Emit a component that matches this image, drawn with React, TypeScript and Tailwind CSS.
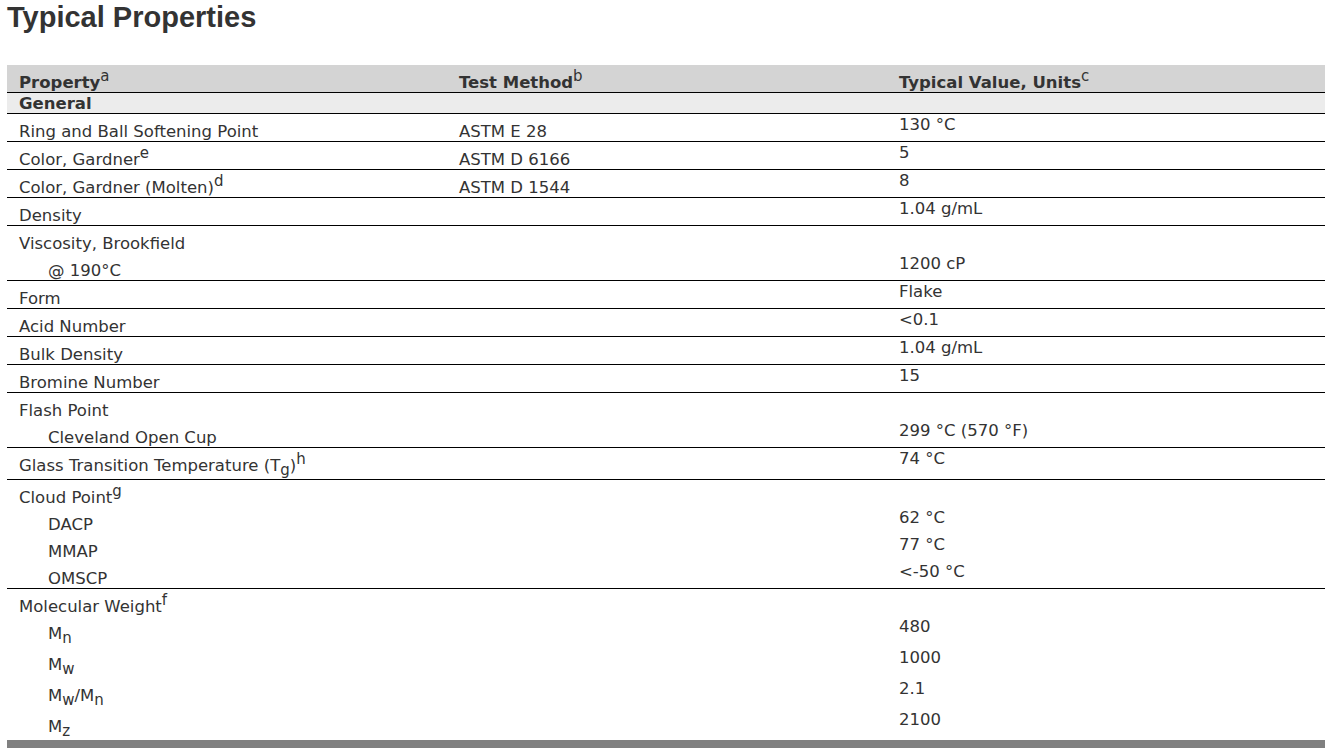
import type { ReactNode } from 'react'

type Line = { p: ReactNode; m?: string; v?: string; indent?: boolean; tall?: boolean }

const Sup = ({ children }: { children: ReactNode }) => (
  <sup className="text-[15px] font-normal">{children}</sup>
)
const Sub = ({ children }: { children: ReactNode }) => (
  <sub className="text-[15px]">{children}</sub>
)

const ROWS: Line[][] = [
  [{ p: 'Ring and Ball Softening Point', m: 'ASTM E 28', v: '130 °C' }],
  [{ p: <>Color, Gardner<Sup>e</Sup></>, m: 'ASTM D 6166', v: '5' }],
  [{ p: <>Color, Gardner (Molten)<Sup>d</Sup></>, m: 'ASTM D 1544', v: '8' }],
  [{ p: 'Density', v: '1.04 g/mL' }],
  [{ p: 'Viscosity, Brookfield' }, { p: '@ 190°C', v: '1200 cP', indent: true }],
  [{ p: 'Form', v: 'Flake' }],
  [{ p: 'Acid Number', v: '<0.1' }],
  [{ p: 'Bulk Density', v: '1.04 g/mL' }],
  [{ p: 'Bromine Number', v: '15' }],
  [{ p: 'Flash Point' }, { p: 'Cleveland Open Cup', v: '299 °C (570 °F)', indent: true }],
  [{ p: <>Glass Transition Temperature (T<Sub>g</Sub>)<Sup>h</Sup></>, v: '74 °C', tall: true }],
  [
    { p: <>Cloud Point<Sup>g</Sup></> },
    { p: 'DACP', v: '62 °C', indent: true },
    { p: 'MMAP', v: '77 °C', indent: true },
    { p: 'OMSCP', v: '<-50 °C', indent: true },
  ],
  [
    { p: <>Molecular Weight<Sup>f</Sup></> },
    { p: <>M<Sub>n</Sub></>, v: '480', indent: true, tall: true },
    { p: <>M<Sub>w</Sub></>, v: '1000', indent: true, tall: true },
    { p: <>M<Sub>w</Sub>/M<Sub>n</Sub></>, v: '2.1', indent: true, tall: true },
    { p: <>M<Sub>z</Sub></>, v: '2100', indent: true, tall: true },
  ],
]

const cols = 'grid grid-cols-[440px_440px_1fr]'

export default function App() {
  return (
    <div className="min-h-screen bg-white text-[#333]" style={{ fontFamily: '"DejaVu Sans", Verdana, sans-serif' }}>
      <h1 className="pl-[7px] pt-[1px] text-[29px] leading-[32px] font-bold text-[#333]"
        style={{ fontFamily: '"Liberation Sans", Arial, sans-serif' }}>
        Typical Properties
      </h1>

      <div className="ml-[7px] mt-[32px] w-[1318px] text-[16.5px] leading-[18px]">
        {/* header */}
        <div className={`${cols} h-[28px] items-end bg-[#d4d4d4] border-b border-black font-bold`}>
          <div className="pl-3">Property<Sup>a</Sup></div>
          <div className="pl-3">Test Method<Sup>b</Sup></div>
          <div className="pl-3">Typical Value, Units<Sup>c</Sup></div>
        </div>
        <div className="h-[21px] bg-[#ececec] border-b border-black font-bold pl-3 pt-[2px]">General</div>

        {ROWS.map((row, i) => (
          <div key={i} className={i < ROWS.length - 1 ? 'border-b border-black' : ''}>
            {row.map((l, j) => (
              <div key={j} className={`${cols} ${l.tall ? 'h-[31px]' : 'h-[27px]'}`}>
                <div className={`pt-[9px] whitespace-nowrap ${l.indent ? 'pl-[41px]' : 'pl-3'}`}>{l.p}</div>
                <div className="pt-[9px] pl-3">{l.m}</div>
                <div className="pt-[2px] pl-3">{l.v}</div>
              </div>
            ))}
          </div>
        ))}
        <div className="h-[8px] bg-[#808080]" />
      </div>
    </div>
  )
}
